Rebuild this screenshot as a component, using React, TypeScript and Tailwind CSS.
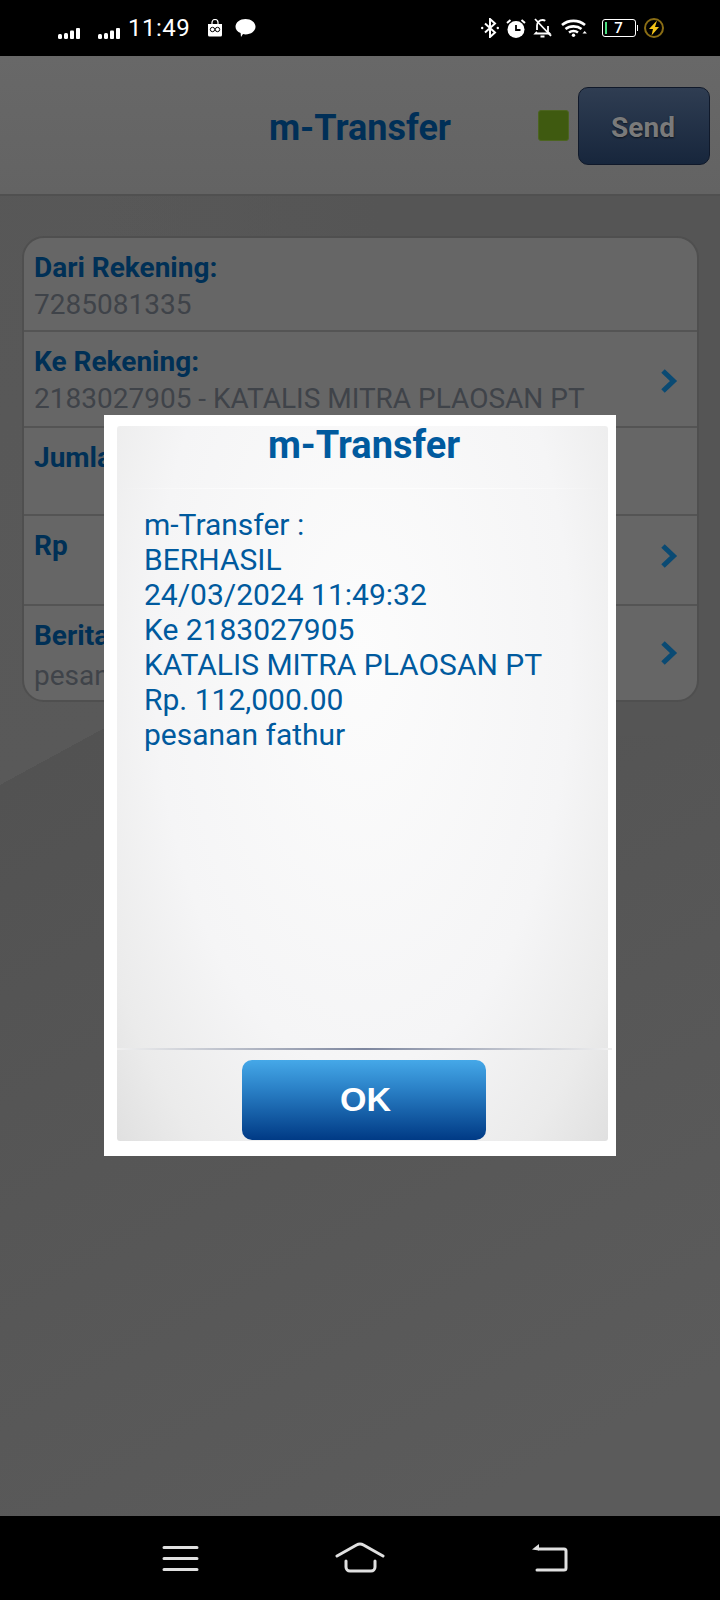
const rows = [
  { label: "Dari Rekening:", value: "7285081335", h: "h-[92px]", arrow: "", valueGap: "mt-[5px]" },
  { label: "Ke Rekening:", value: "2183027905 - KATALIS MITRA PLAOSAN PT", h: "h-[96px]", arrow: "mt-[21px]", valueGap: "mt-[5px]" },
  { label: "Jumlah", value: "", h: "h-[88px]", arrow: "", valueGap: "mt-[5px]" },
  { label: "Rp", value: "", h: "h-[90px]", arrow: "mt-[12px]", valueGap: "mt-[5px]" },
  { label: "Berita", value: "pesanan fathur", h: "h-[96px]", arrow: "mt-[19px]", valueGap: "mt-[8px]" },
];

const lines = [
  "m-Transfer :",
  "BERHASIL",
  "24/03/2024 11:49:32",
  "Ke 2183027905",
  "KATALIS MITRA PLAOSAN PT",
  "Rp. 112,000.00",
  "pesanan fathur",
];

function SignalBars({ className }: { className?: string }) {
  return (
    <svg className={className} width="24" height="12" viewBox="0 0 24 12" fill="white" aria-hidden>
      <rect x="0" y="7" width="4" height="5" rx="1.5" />
      <rect x="6" y="6" width="4" height="6" rx="1.5" />
      <rect x="12" y="3.500" width="4" height="8.500" rx="1" />
      <rect x="18" y="1" width="4" height="11" rx="1" />
    </svg>
  );
}

function StatusBar() {
  return (
    <div className="h-[56px] bg-black flex items-center justify-between pl-[58px] pr-[56px] text-white">
      <div className="flex items-center">
        <SignalBars className="mt-[9px]" />
        <SignalBars className="ml-[16px] mt-[9px]" />
        <span className="ml-[6px] text-[24px] leading-none tracking-[0.5px]">11:49</span>
        <svg className="ml-[17px]" width="16" height="18" viewBox="0 0 16 18" aria-hidden>
          <path d="M1 5h14v11a1.500 1.500 0 0 1-1.500 1.500h-11A1.500 1.500 0 0 1 1 16z" fill="white" />
          <path d="M5 5V3.500a3 3 0 0 1 6 0V5" fill="none" stroke="white" strokeWidth="1.200" />
          <circle cx="5.500" cy="10.500" r="2.200" fill="none" stroke="black" strokeWidth="1" />
          <circle cx="10.500" cy="10.500" r="2.200" fill="none" stroke="black" strokeWidth="1" />
        </svg>
        <svg className="ml-[12px] -mt-[1px]" width="21" height="20" viewBox="0 0 21 19" fill="white" aria-hidden>
          <path d="M10.500 0.500c5.500 0 10 3.400 10 7.700s-4.500 7.700-10 7.700c-.9 0-1.700-.1-2.500-.3L6 18.500l-.4-3.900C2.500 13.200.5 10.900.5 8.200.5 3.900 5 .5 10.500.5z" />
        </svg>
      </div>
      <div className="flex items-center">
        <svg width="18" height="20" viewBox="0 0 18 20" fill="none" stroke="white" strokeWidth="2" aria-hidden>
          <path d="M4 5.500l10 9-5 4.500V1l5 4.500-10 9" />
          <circle cx="1.200" cy="10" r="1.200" fill="white" stroke="none" />
          <circle cx="16.800" cy="10" r="1.200" fill="white" stroke="none" />
        </svg>
        <svg className="ml-[7px]" width="20" height="19" viewBox="0 0 20 19" aria-hidden>
          <circle cx="10" cy="10.500" r="8.500" fill="white" />
          <path d="M10 6v5h4.500" fill="none" stroke="black" strokeWidth="1.800" />
          <path d="M1 4L4.500 1M19 4L15.500 1" stroke="white" strokeWidth="2" fill="none" />
        </svg>
        <svg className="ml-[7px]" width="20" height="20" viewBox="0 0 20 20" fill="none" stroke="white" strokeWidth="1.800" aria-hidden>
          <path d="M4 12V7.500A5.500 5.500 0 0 1 9.500 2c1 0 2 .3 2.800.8M15 8v6l1.500 1.500H2.500L4 14" />
          <path d="M7.500 18.500h4" strokeWidth="2" />
          <path d="M2 1l16 17" />
        </svg>
        <svg className="ml-[8px]" width="26" height="18" viewBox="0 0 26 18" aria-hidden>
          <g fill="none" stroke="white" strokeWidth="2.600">
            <path d="M1 6c6.500-5.500 16.500-5.500 23 0" />
            <path d="M4.500 10c4.300-3.500 11.700-3.500 16 0" />
            <path d="M8 13.500c2.500-1.800 6.500-1.800 9 0" />
          </g>
          <circle cx="12.500" cy="16.300" r="1.700" fill="white" />
          <path d="M21.500 14.500l2.200-2.500 2.200 2.500z" fill="white" />
        </svg>
        <div className="ml-[15px] w-[34px] h-[18px] rounded-[3px] border border-white flex items-center relative">
          <span className="ml-[2px] w-[2px] h-[12px] bg-[#4ade80]" />
          <span className="absolute inset-0 flex items-center justify-center text-[15px] leading-none font-medium">7</span>
        </div>
        <span className="ml-[1px] w-[1.500px] h-[6px] bg-white" />
        <svg className="ml-[6px]" width="20" height="20" viewBox="0 0 20 20" aria-hidden>
          <circle cx="10" cy="10" r="9" fill="none" stroke="#8a6d14" strokeWidth="2" />
          <path d="M13 2.500L5 11h4l-1.500 6.500L15 9h-4z" fill="#f5c518" />
        </svg>
      </div>
    </div>
  );
}

function NavBar() {
  return (
    <div className="h-[84px] bg-black flex items-start pl-[162px] pt-[27px]">
      <svg width="37" height="30" viewBox="0 0 37 30" fill="none" stroke="#e0e0e0" strokeWidth="3" strokeLinecap="round" aria-hidden>
        <path d="M2 4.500h33M2 15.500h33M2 26.500h33" />
      </svg>
      <svg className="ml-[136px] -mt-[2px]" width="50" height="32" viewBox="0 0 50 32" fill="none" stroke="#e0e0e0" strokeWidth="3" strokeLinecap="round" strokeLinejoin="round" aria-hidden>
        <path d="M2 15L21.500 4a7 7 0 0 1 7 0L48 15" />
        <path d="M11 20v6a4 4 0 0 0 4 4h21a4 4 0 0 0 4-4v-6" />
      </svg>
      <svg className="ml-[145px]" width="38" height="30" viewBox="0 0 38 30" fill="none" aria-hidden>
        <path d="M9 6h25a2 2 0 0 1 2 2v17a2 2 0 0 1-2 2H7" stroke="#e0e0e0" strokeWidth="3" strokeLinecap="round" />
        <path d="M2 6.500L9 1v6.500z" fill="#e0e0e0" />
      </svg>
    </div>
  );
}

export default function App() {
  return (
    <div className="relative w-[720px] h-[1600px] flex flex-col overflow-hidden bg-[#565656] font-['Roboto',sans-serif]">
      <StatusBar />

      {/* body: diagonal wedge on the left fades out towards the right */}
      <div className="flex-1 flex flex-col [background:linear-gradient(90deg,transparent_100px,#555_380px)_0_0/100%_680px_no-repeat,linear-gradient(151.4deg,#575757_0px,#595959_640px,#525252_640px,#5b5b5b_1500px)]">
        {/* header */}
        <div className="h-[140px] shrink-0 border-b-2 border-[#505050] bg-[linear-gradient(180deg,#686868,#636363)] flex items-center relative">
          <h1 className="w-full text-center text-[36px] font-bold text-[#002f57] mt-[5px]">m-Transfer</h1>
          <span className="absolute left-[538px] top-[54px] w-[31px] h-[31px] rounded-[3px] bg-[#3f5a10] border border-[#4c6420]" />
          <button
            type="button"
            className="absolute left-[578px] top-[31px] w-[132px] h-[78px] rounded-[10px] border border-[#10192a] bg-[linear-gradient(180deg,#2f3d52,#17263c)] text-[#7a7a7a] text-[28px] font-bold pt-[4px] pr-[2px] [text-shadow:0_1px_2px_rgba(0,0,0,0.6)]"
          >
            Send
          </button>
        </div>

        {/* form card */}
        <div className="ml-[22px] w-[677px] mt-[40px] rounded-[22px] border-2 border-[#4f4f4f] bg-[#666] overflow-hidden">
          {rows.map((row, i) => (
            <div
              key={row.label}
              className={`${row.h} pl-[10px] pr-[19px] pt-[15px] flex items-start justify-between ${i > 0 ? "border-t-2 border-[#545454]" : ""}`}
            >
              <div>
                <p className="text-[28px] leading-[30px] font-bold text-[#003056]">{row.label}</p>
                <p className={`${row.valueGap} text-[28px] leading-[34px] text-[#3f4349]`}>{row.value}</p>
              </div>
              {row.arrow && (
                <svg className={row.arrow} width="18" height="26" viewBox="0 0 18 26" fill="none" stroke="#0a4a73" strokeWidth="5" aria-hidden>
                  <path d="M3 3l10.500 10L3 23" />
                </svg>
              )}
            </div>
          ))}
        </div>
      </div>

      <NavBar />

      {/* result dialog */}
      <div className="absolute left-[104px] top-[415px] w-[512px] h-[741px] bg-white pt-[11px] pl-[13px] pr-[8px] pb-[15px]">
        <div className="h-full rounded-[3px] flex flex-col bg-[radial-gradient(ellipse_at_50%_32%,#fcfcfc_0%,#f5f5f6_60%,#ebebeb_85%,#e0e0e0_100%)]">
          <h2 className="h-[62px] shrink-0 text-center text-[38px] leading-[38px] font-bold text-[#005a9e] pl-[3px]">m-Transfer</h2>
          <div className="h-px shrink-0 bg-[linear-gradient(90deg,transparent,#fdfdfd_30%,#fdfdfd_70%,transparent)]" />
          <div className="flex-1 pl-[27px] pt-[18px] text-[#005a9e] text-[30px] leading-[35px]">
            {lines.map((line) => (
              <p key={line}>{line}</p>
            ))}
          </div>
          <div className="h-[2px] shrink-0 -mr-[4px] bg-[linear-gradient(90deg,#f0f0f0,#7d869e_50%,#f0f0f0)]" />
          <div className="h-[91px] shrink-0 flex items-end justify-center pb-[1px] pl-[2px]">
            <button
              type="button"
              className="w-[244px] h-[80px] rounded-[10px] bg-[linear-gradient(180deg,#45a8e8,#2b82c8_35%,#003a85)] text-white text-[34px] font-bold font-['Liberation_Sans',sans-serif] pl-[4px] pb-[2px]"
            >
              OK
            </button>
          </div>
        </div>
      </div>
    </div>
  );
}
